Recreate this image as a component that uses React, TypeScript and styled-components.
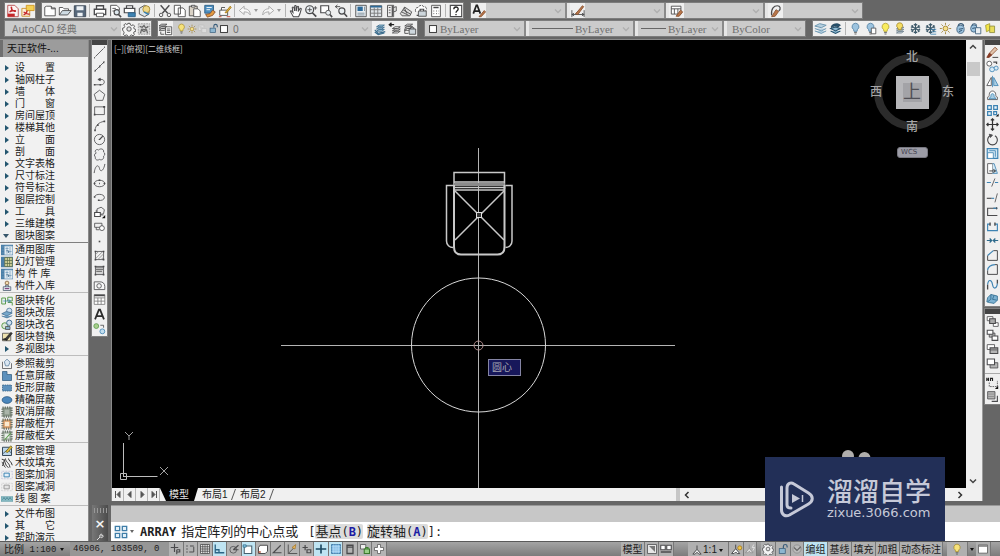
import React from "react";
import styled, { createGlobalStyle, css } from "styled-components";

const UI = `"Noto Sans", "Noto Sans CJK SC", sans-serif`;
const CJK = `"Liberation Sans", "Noto Sans CJK SC", sans-serif`;
const MONO = `"Liberation Mono", "Noto Sans CJK SC", monospace`;

const INK = "#4a4a4c";
const BLUE = "#3d83b3";
const PALE = "#a9cfe4";
const GOLD = "#e2b93c";
const GREEN = "#5a9a4a";
const BROWN = "#8a5332";

/* ---------- icons, all on a 16 by 16 grid ---------- */

const bulb = (fill: string, stroke: string) => (
  <>
    <path d="M8 1.5a4.3 4.3 0 0 0-2.4 7.8l.5 2.2h3.8l.5-2.2A4.3 4.3 0 0 0 8 1.5z" fill={fill} stroke={stroke} />
    <path d="M6.3 13h3.4M6.8 14.8h2.4" stroke="#555" />
  </>
);
const sheets = (x: number, y: number, color: string, fill = "none") => (
  <g transform={`translate(${x} ${y})`} stroke={color} fill={fill}>
    <path d="M1 7l3-2h6l-3 2zM1 4.500l3-2h6l-3 2zM1 9.500l3-2h6l-3 2z" />
  </g>
);
const sun = (
  <>
    <circle cx="8" cy="8" r="3" fill="#f6e08a" stroke="#9a7a28" />
    <path d="M8 1v2.500M8 12.500V15M1 8h2.500M12.500 8H15M3 3l1.800 1.800M11.200 11.200L13 13M13 3l-1.800 1.800M4.800 11.200L3 13" stroke="#9a7a28" />
  </>
);
const flake = (c: string) => (
  <path d="M8 1.500v13M2.500 4.700l11 6.600M13.500 4.700l-11 6.600M6 2.500l2 2 2-2M6 13.500l2-2 2 2M2.300 7.500l2.600-1-.6-2.700M13.700 7.500l-2.600-1 .6-2.700M2.300 8.800l2.600 1-.6 2.700M13.700 8.800l-2.600 1 .6 2.700" stroke={c} strokeWidth="1.300" />
);
const padlock = (open: boolean, c: string, f: string) => (
  <>
    <rect x="3" y="7.500" width="8" height="6.500" fill={f} stroke={c} />
    <path d={open ? "M8.500 7V4.500a2.500 2.500 0 0 1 5 0V6" : "M4.800 7V4.500a2.300 2.300 0 0 1 4.500 0V7"} stroke={c} strokeWidth="1.600" />
  </>
);
const hatchBox = (c: string, f: string) => (
  <>
    <rect x="1" y="1" width="14" height="14" fill={f} stroke={c} />
    <path d="M1 5.500h14M1 10.500h14M5.500 1v14M10.500 1v14" stroke={c} />
  </>
);
const fringe = (f: string, inner: string) => (
  <>
    <path d="M2 2h12v12H2z" fill={f} stroke="#667066" strokeWidth="3" strokeDasharray="1.5 1.5" />
    <path d="M5 5h6v6H5z" fill={inner} stroke="none" />
  </>
);

const ICONS = {
  pdf: (
    <>
      <path d="M2 1.500h8l4 4v9H2z" fill="#fbf4f4" stroke="#b4494a" />
      <path d="M4 9c2-1 3-3 2.500-5C6 3 5 4 7 6.500s4 2.500 4 1.500-4-.5-7 1z" stroke="#c4282b" strokeWidth="1.300" />
      <path d="M2 11h8v3.500H2z" fill="#c4282b" stroke="none" />
    </>
  ),
  pdfMail: (
    <>
      <path d="M1 5h9v9H1z" fill="#fbf0dc" stroke="#c98f2a" />
      <path d="M6 1.500h9v6H6z" fill="#f3cf52" stroke="#d09522" />
      <path d="M3 12.500c2-1 4-3 4-5M3 9c2 2 4 3 7 2.500" stroke="#c4282b" strokeWidth="1.500" />
    </>
  ),
  newFile: <path d="M2 13.500v-10l2-1h5l1.500 2H14v9z M9.500 2.500v3H14" fill="#fff" />,
  open: (
    <>
      <path d="M1.500 12.500V4h4l1.500 1.500h5V8" fill="#fff" />
      <path d="M1.500 12.500L5 7.500h10l-4 5z" fill="#cfdbe3" />
    </>
  ),
  save: (
    <>
      <path d="M1.500 2h13v12.500h-13z" fill="#56677a" stroke="#3a4654" />
      <path d="M4 2.500h8V7H4zM5 10h6v4H5z" fill="#eef2f5" stroke="none" />
    </>
  ),
  print: (
    <>
      <path d="M4 6V2h8v4M1.500 6h13v6h-13z" fill="#fff" strokeWidth="1.500" />
      <path d="M4 10.500h8v4H4z" fill="#fff" />
    </>
  ),
  preview: (
    <>
      <path d="M3 14V1.500h7l3 3V7M5 5h4M5 8h2" fill="#fff" />
      <circle cx="10" cy="9.500" r="3" fill="#dfe9ef" strokeWidth="1.300" />
      <path d="M12 12l3 3" strokeWidth="1.800" />
    </>
  ),
  publish: (
    <>
      <path d="M4 5V2h7v3M1.500 5h12v5h-12z" fill="#fff" strokeWidth="1.400" />
      <path d="M6 10h8v4.500H6z" fill={BLUE} stroke="#2b5e83" />
    </>
  ),
  printGlobe: (
    <>
      <path d="M1.500 5l6-3.500 5 2v8l-5 3-6-3z" fill="#dfe6ea" />
      <circle cx="9.500" cy="6" r="4" fill="#efd785" stroke="#a78a35" />
      <path d="M7 9l5 3" stroke={BLUE} strokeWidth="1.800" />
    </>
  ),
  cut: (
    <>
      <path d="M3 1.500l8 9M13 1.500l-8 9" strokeWidth="1.600" />
      <circle cx="3.500" cy="12.500" r="2" />
      <circle cx="12.500" cy="12.500" r="2" />
    </>
  ),
  copy: <path d="M1.500 1.500h7v10h-7zM6 4.500h5.500l2.500 2.500v7.500H6z" fill="#fff" />,
  paste: (
    <>
      <path d="M1.500 2.500h9v11h-9z" fill="#d9d2c6" />
      <path d="M4 1.500h4v2H4zM6.500 5.500h5l2.500 2.500v6.500H6.500z" fill="#fff" />
    </>
  ),
  matchProp: (
    <>
      <path d="M2 1.500h10v9H2z" fill="#4d8fc0" stroke="#2b5e83" />
      <path d="M3 12l5-1 3-4 3 2-3 4-6 2z" fill="#e39a3f" stroke={BROWN} />
      <path d="M4 4h6M4 6.500h4" stroke="#fff" />
    </>
  ),
  blockEdit: (
    <>
      <path d="M2 7h9v6H2zM4 7V4h4" fill="#fff" />
      <path d="M8 10l6-7.500 1 1.500-5 6z" fill={GOLD} stroke="#a5781c" />
      <path d="M1 14.500h3M10 14.500h4" stroke="#c23b2b" />
    </>
  ),
  undo: <path d="M14 12.500c0-5-3-7-7-7V2.500L1.500 7.500 7 12V9c3 0 5 .5 7 3.500z" fill="#f7f7f7" stroke="#a2a2a2" />,
  redo: <path d="M2 12.500c0-5 3-7 7-7V2.500l5.500 5L9 12V9c-3 0-5 .5-7 3.500z" fill="#f7f7f7" stroke="#a2a2a2" />,
  hand: <path d="M5 14.500C3.500 12 2 9.500 1.500 8.200c.8-1 2 0 3 1.300L3.700 4c.9-1 1.700-.3 2 .5L6.500 8V2.200c.7-.9 1.700-.5 1.700.3V8l1.300-5c.8-.7 1.600-.2 1.500.7L10.500 8.500 12.700 5c.8-.4 1.500 0 1.300.9-.7 3-1.500 6-3 8.600z" fill="#fff" strokeWidth="1.200" />,
  zoomRt: (
    <>
      <circle cx="6.500" cy="6.500" r="4.500" fill="#e9eef1" strokeWidth="1.400" />
      <path d="M9.500 10l4.500 4.500" strokeWidth="2" />
      <path d="M6.500 4v5M4 6.500h5M13 2.500v4M11 4.500h4" />
    </>
  ),
  zoomWin: (
    <>
      <path d="M2 2h9v8H2z" fill="#fff" strokeWidth="1.300" />
      <circle cx="10.500" cy="10" r="2.800" fill="#e9eef1" />
      <path d="M12.500 12l2.500 3" strokeWidth="1.800" />
    </>
  ),
  zoomPrev: (
    <>
      <circle cx="9" cy="8" r="3.500" fill="#e9eef1" strokeWidth="1.300" />
      <path d="M11.500 10.500l3.500 4" strokeWidth="1.800" />
      <path d="M7 3H1.500M4 1L1.500 3 4 5" />
    </>
  ),
  properties: (
    <>
      <path d="M2 1.500h12v13H2z" fill="#e7ecf0" />
      <path d="M4 3h6v5H4z" fill="#2d6a99" stroke="none" />
      <path d="M4 10.500h8M4 12.500h8M12 3v5" stroke="#7b8d99" />
    </>
  ),
  designCenter: (
    <>
      <path d="M1.500 2h13v12.500h-13z" fill="#dfe4e8" />
      <path d="M1.500 3h13" stroke="#2d6a99" strokeWidth="2" />
      <path d="M1.500 6.500h13M1.500 10.500h13M6 4v10M10 4v10" stroke="#777" />
    </>
  ),
  palettes: (
    <>
      <path d="M4 1.500h7v13H4z" fill="#ececec" />
      <path d="M9.500 2v12" strokeWidth="1.400" />
      <path d="M5.500 4h2M5.500 7h2M5.500 10h2M11 4l3-1v5l-3 1" />
    </>
  ),
  sheetSet: <path d="M1.500 11l5-7.500 8 5.500-2 4.500h-9zM3 9l8 4M4.500 6.500l8.500 5M6 4l3 7" fill="#ddd" />,
  markup: (
    <>
      <path d="M2 9c-1-3 0-5 2.500-5C6 1 10 1 11 3c3-.5 4.500 3 2 5" fill="#fff" strokeDasharray="3 1" />
      <path d="M5 8h9v6H5z" fill="#cdd6dc" />
      <path d="M7 8V6h4v2M3 13h2" strokeWidth="1.400" />
    </>
  ),
  calc: (
    <>
      <path d="M3 1.500h10v13H3z" fill="#fff" />
      <path d="M5 4h6" strokeWidth="1.700" />
      <path d="M5 8h1M8 8h1M11 8h.500M5 11h1M8 11h1M11 11h.500" />
    </>
  ),
  help: (
    <>
      <path d="M1.500 1.500h13v13h-13z" fill="#fff" strokeWidth="1.300" />
      <path d="M5.500 6c0-3.500 5-3.300 5-.3 0 2-2.500 2-2.500 4.300M8 11.300v1.500" stroke="#222" strokeWidth="1.500" />
    </>
  ),
  textStyle: (
    <>
      <path d="M1.500 11L5 1.500h1L9.500 11M3 8h5" stroke="#222" strokeWidth="2" />
      <path d="M8 14.500l6-7 1.500 1.500-5 5.500z" fill="#b9764a" stroke={BROWN} />
    </>
  ),
  dimStyle: (
    <>
      <path d="M1 7v8M15 7v8M1 12h14M3.500 10.500L1 12l2.500 1.500M12.500 10.500L15 12l-2.500 1.500" />
      <path d="M5 11l3-3 5-6 1.500 1L10 9l-2 3z" fill="#b9764a" stroke={BROWN} />
    </>
  ),
  tableStyle: (
    <>
      <path d="M1.500 2.500h11v9h-11zM1.500 5.500h11M5 5.500v6M9 5.500v6" fill="#fff" />
      <path d="M7 14l5-7 2.500 2-4 5z" fill="#b9764a" stroke={BROWN} />
    </>
  ),
  leaderStyle: (
    <>
      <path d="M3 13C2 5 6 2 9.500 2S14 6 11 8" strokeWidth="1.400" />
      <path d="M3 14.500l5-8 3 2-4 5.500z" fill="#b9764a" stroke={BROWN} />
    </>
  ),
  gear: (
    <>
      <path d="M6.800 1.500h2.400l.4 1.900 1.500.7 1.700-1 1.600 1.700-1 1.700.6 1.500 1.700.5v0 2.200l-1.800.4-.7 1.500 1 1.600-1.600 1.600-1.700-1-1.400.6-.4 1.700H6.700l-.4-1.800-1.500-.6-1.600 1-1.700-1.600 1-1.700-.6-1.400L.7 9.300V7l1.700-.4.700-1.500-1-1.700 1.600-1.600 1.700 1 1.400-.6z" fill="#f4f4f4" />
      <circle cx="8" cy="8" r="2.500" fill="#e4e4e4" />
    </>
  ),
  myWorkspace: (
    <>
      <path d="M1.500 2h13v12h-13z" fill="#d8d8d8" stroke="#999" strokeDasharray="2 1" />
      <path d="M3 5l3 1 2-2 2 3 3-2M4 13l1-4 3 2 3-2 1 4M5 8l6 1" stroke="#666" strokeWidth="1.400" />
    </>
  ),
  layerProps: (
    <>
      {sheets(-1, 0, INK)}
      <path d="M7.500 5.500h7v9h-7zM9 8h4M9 10h4M9 12h4" fill="#fff" />
      <path d="M2 11v3h4" />
    </>
  ),
  bulbOn: bulb("#f6e27a", "#a48a2c"),
  bulbBlue: bulb("#9cc3df", "#4d7da0"),
  bulbBlueIso: (
    <>
      {bulb("#9cc3df", "#4d7da0")}
      <path d="M9 7.500h5.500v7H9z" fill="#fff" />
    </>
  ),
  bulbSheets: (
    <>
      {sheets(2, 4, "#667a88", "#d5dee4")}
      <path d="M7 1a3.500 3.500 0 0 0-2 6.500v2h4v-2A3.500 3.500 0 0 0 7 1z" fill="#f4dc62" stroke="#a48a2c" />
    </>
  ),
  sun,
  vpFreeze: <path d="M2 3h8v4M2 3v8h4M7 8h7v6H7z" stroke="#bdbdbd" fill="#dcdcdc" />,
  unlock: padlock(true, "#3a5d7a", "#8db6d0"),
  swatch: <rect x="2.500" y="2.500" width="11" height="11" fill="#fff" stroke="#333" strokeWidth="1.500" />,
  layerCurrent: <>{sheets(3, 1, "#3a6c8d", PALE)}<path d="M2 9l4 4 8-2M2 11.500l4 3 7-2" stroke="#3a6c8d" strokeWidth="1.300" /></>,
  layerPrev: <>{sheets(4, 3, INK, "#fff")}<path d="M7 3H2M4 1L1.500 3 4 5" stroke="#222" strokeWidth="1.500" /></>,
  layerState: <>{sheets(1, 0, INK, "#fff")}<path d="M7 8h7.500v6H7zM8.500 8V6.500h4V8" fill="#cdd6dc" /><path d="M2 8v5h4" /></>,
  layerStack: (
    <path d="M1 5l6-3 8 2-6 3zM1 8l8 3 6-3M1 11l8 3 6-3" fill="#b5cfdf" stroke="#6d97b1" strokeWidth="1.200" />
  ),
  layerMerge: (
    <>
      <path d="M3 5c2-3 8-4 11-1l-3 2c-3-2-6-1-8 1z" fill="#27536f" stroke="#1c3e55" />
      <path d="M2 8l6-2 6 2-6 3zM2 11l6 3 6-3" fill="#8fbad3" stroke="#27536f" strokeWidth="1.300" />
    </>
  ),
  bulbYellow: bulb("#f9ec5e", "#b1a02c"),
  flake: flake("#3c5868"),
  flakeSheets: <>{flake("#3c5868")}<path d="M8 9h7M9 12h6M8 15h7" stroke="#3d83b3" /></>,
  lockBlue: <><ellipse cx="8" cy="9" rx="4.500" ry="5" fill="#9cc3df" stroke="#3a5d7a" /><path d="M5 5c1-4 6-4 7 0M6 9l5-1M6 12l4-2" stroke="#3a5d7a" strokeWidth="1.300" /></>,
  lockBlueIso: <><ellipse cx="6" cy="8" rx="4" ry="4.500" fill="#9cc3df" stroke="#3a5d7a" /><path d="M4 8l4-1M3.500 4.500c1-3 5-3 6 0" stroke="#3a5d7a" strokeWidth="1.300" /><path d="M8 7h6.500v7.500H8z" fill="#e9eef1" stroke="#3a5d7a" /></>,
  lockYellow: <><path d="M2 4l5-2v8l-4 2z" fill="#f4e545" stroke="#a09a2c" /><path d="M7 5h6v8H7z" fill="#e8dd5c" stroke="#8a8a3c" /></>,

  line: <><path d="M3 13L13 3" /><path d="M1.500 14.500h1M13.500 1.500h1" strokeWidth="2" /></>,
  xline: <><path d="M2 14L14 2" /><path d="M2 13h1.500M7.500 8H9M12.500 3H14" strokeWidth="2.200" /></>,
  pline: <><path d="M2 12h8c5 0 5-6 1-6.500H8" /><path d="M1 12h2M8 12h2" strokeWidth="2" /><path d="M6 5.500L9 4v3z" fill={INK} /></>,
  polygon: <path d="M8 1.500l6.500 5L12 14H4L1.500 6.500z" />,
  rect: <><path d="M2 3.500h12v9.500H2z" /><path d="M12.500 3.500H15M1 13h2" strokeWidth="2.200" /></>,
  arc: <><path d="M2.500 14C3 8 7 4 13.500 3" /><path d="M1.500 14h2M5 7.500h2M13 3h2" strokeWidth="2.200" /></>,
  circle: <><circle cx="8" cy="8" r="6.300" /><path d="M8 8l4-4M7 8h2" strokeWidth="1.400" /></>,
  cloud: <path d="M4 6C1 4 4 .5 7 2.500 9 0 14 1 13 5c2 1 2 4 0 5 1 4-3 5.500-5 4-3 2-6 0-5-3-2-1-1.500-4 1-5z" />,
  spline: <path d="M1.500 13C3 3 7 3 8 8s5 3 6.500-5M1 13h1M14 3h1" />,
  ellipse: <><ellipse cx="8" cy="8" rx="6.500" ry="4" /><path d="M1 8h2M13 8h2M7 4h2M7.500 8h1" strokeWidth="1.800" /></>,
  ellipseArc: <><path d="M2 7c1-4 12-4 12 1 0 3-4 4-7 3.500" /><path d="M1 7.500h2M6 11.500h2" strokeWidth="1.800" /></>,
  insert: <><path d="M5 3.500l5-2 4 3-1 5-5 1-3-3z" fill="#eee" /><path d="M2 8h7v5H2z" fill="#fff" strokeWidth="1.300" /><path d="M4 8V5M9 11h4" /><path d="M15 11v4h-4z" fill="#111" stroke="none" /></>,
  block: <><path d="M2 4h9v5H2zM4 9v3h4" /><circle cx="11" cy="10" r="3" fill="#fff" /></>,
  point: <path d="M7 8h2" strokeWidth="2" />,
  hatch: <><path d="M3 3h10v10H3z" /><path d="M3 7l4-4M3 12l9-9M6 13l7-7M10 13l3-3" stroke="#888" /><path d="M2 3h2M12 3h2M2 13h2M12 13h2" strokeWidth="2" /></>,
  gradient: <><path d="M3 3h10v10H3z" fill="#d4d4d4" /><path d="M3 4h10M3 6.500h10M4 9h7" stroke="#777" strokeWidth="1.500" /><path d="M2 3h2M12 3h2M2 13h2M12 13h2" strokeWidth="2" /></>,
  region: <><path d="M1.500 3.500h7a6 6 0 0 1 6 5.500v4h-13z" fill="#f8f8f8" /><circle cx="7.500" cy="8.500" r="2.800" /></>,
  table: <><path d="M1.500 2h13v12h-13zM1.500 6h13M6 6v8M10 6v8M1.500 10h13" fill="#fff" stroke="#777" /><path d="M1.500 3h13" strokeWidth="2" /></>,
  mtext: <path d="M2.500 14L7.300 2h1.400l4.800 12M4.500 10h7" stroke="#2c2c2c" strokeWidth="2.200" />,
  addSelected: <><circle cx="4" cy="5" r="3" fill="#a8cf8c" stroke={GREEN} /><circle cx="11.500" cy="11.500" r="3" fill="#c4dff0" stroke={BLUE} /><path d="M9 4h4v3" /></>,

  erase: <><path d="M4 9l7-7.500 3 2.500-7 7z" fill="#e1c3ac" stroke={BROWN} /><path d="M4 9l3 2-3 3H1z" fill="#8d3b22" stroke="#7a3420" /><path d="M8 14h7" stroke="#222" /></>,
  copyObj: <><circle cx="4" cy="4.500" r="3" fill="#fff" stroke={INK} /><circle cx="7.500" cy="11.500" r="3" fill="#d8ecf8" stroke={BLUE} /><circle cx="12.500" cy="10" r="2.500" fill="#d8ecf8" stroke={BLUE} /><path d="M9 2.500h4V5" strokeWidth="1.600" /></>,
  mirror: <><path d="M6.500 3v10H1z" fill="#fff" /><path d="M9.500 3v10H15z" fill={PALE} stroke={BLUE} /><path d="M8 1v14" stroke={BLUE} /></>,
  offset: <><path d="M2 13v-3c2 0 2-2 2-3 0-6 8-6 8 0 0 1 0 3 2 3v3z" fill="#fff" /><path d="M4 12v-1c2 0 2-2 2-3 0-3 4-3 4 0 0 1 0 3 2 3v1z" fill={PALE} stroke={BLUE} /></>,
  array: <><path d="M2 2h4.500v4.500H2zM9.500 2H14v4.500H9.500zM2 9.500h4.500V14H2z" fill="#eaf4fa" stroke={BLUE} strokeWidth="1.500" /><path d="M9.500 9.500H13V13H9.500z" fill="#eaf4fa" stroke={BLUE} strokeWidth="1.500" /><path d="M15.500 12v3.500H12z" fill="#111" stroke="none" /></>,
  arrayCommand: <path d="M1.500 1.500h5v5h-5zM9.500 1.500h5v5h-5zM1.500 9.500h5v5h-5zM9.500 9.500h5v5h-5z" fill="#e4f1f9" stroke="#3f7ea8" strokeWidth="1.500" />,
  move: <path d="M8 1v14M1 8h14M6 3l2-2 2 2M6 13l2 2 2-2M3 6L1 8l2 2M13 6l2 2-2 2" stroke="#333" strokeWidth="1.500" />,
  rotate: <><path d="M5 3.500a6 6 0 1 0 6 0" strokeWidth="1.400" /><path d="M4 1.500l4 1-2.500 3z" fill={INK} /></>,
  scale: <><path d="M1.500 2h13v12h-13z" fill="#d4e8f4" stroke={BLUE} strokeWidth="1.400" /><path d="M2 7h7v7H2z" fill="#fff" stroke={BLUE} /><path d="M4 4.500h7.500V12" stroke={BLUE} /></>,
  stretch: <><path d="M2 2h6v12H2z" fill="#fff" /><path d="M8 2h2l4 12H8" fill="#d4e8f4" stroke={BLUE} /><path d="M4 11h7M9 9l3 2-3 2" stroke="#222" /></>,
  trim: <><path d="M1 8h5M11 8h4" stroke={BLUE} strokeWidth="1.400" /><path d="M7 13l4-10" /></>,
  extend: <><path d="M1 9h6" stroke={INK} strokeWidth="1.400" /><path d="M7 9h3" stroke={BLUE} strokeWidth="1.400" /><path d="M11 14l3-11" /></>,
  breakAt: <><path d="M14 4H2v9h12" stroke={INK} strokeWidth="1.300" /><path d="M9 4h5" stroke={BLUE} strokeWidth="1.500" /><path d="M13 2.500v3" /></>,
  breakGap: <><path d="M5 5H2v8h12V5h-3" stroke={BLUE} strokeWidth="1.400" /><path d="M5 3v4M11 3v4" strokeWidth="1.700" /></>,
  join: <path d="M1 8h5M10 8h5M4.500 5.500L7 8l-2.500 2.500M11.500 5.500L9 8l2.500 2.500" stroke="#2d6a8c" strokeWidth="1.500" />,
  chamfer: <><path d="M2 8v6h12V2H9" strokeWidth="1.200" /><path d="M2 8l7-6" stroke={BLUE} strokeWidth="1.400" /></>,
  fillet: <><path d="M2 9v5h12V2h-3" strokeWidth="1.200" /><path d="M2 9c0-4 4-7 9-7" stroke={BLUE} strokeWidth="1.400" /></>,
  blend: <><path d="M2 14V8M14 2v5" strokeWidth="1.600" /><path d="M2 8c1-7 5-6 6 0s5 6 6-1" stroke={BLUE} strokeWidth="1.400" /></>,
  explode: <><path d="M2 7l4-4 4 1 4 1v5l-4 4-6-1-3-1z" fill="#7db2d2" stroke="#2d6a8c" /><path d="M6 3v6l-4 3M10 4l-2 5 5 1" stroke="#2d6a8c" /></>,

  orderFront: <><path d="M1.500 2h7v5h-7zM9 9.500h6v4.500H9z" fill="#fff" /><path d="M4.500 4.500h7v6h-7z" fill="#a9a9a9" strokeWidth="1.300" /></>,
  orderBack: <><path d="M4 5h7v5H4z" fill="#bbb" /><path d="M1.500 1.500h7v5h-7zM7.500 8.500h7V14h-7z" fill="#fff" strokeWidth="1.300" /></>,
  orderAbove: <><path d="M1.500 2h9v6h-9z" fill="#fff" /><path d="M5 6h9.500v7H5z" fill="#b5b5b5" strokeWidth="1.300" /><path d="M5 8.500h9" /></>,
  orderUnder: <><path d="M5 7h9.500v6.500H5z" fill="#b5b5b5" /><path d="M1.500 2.500h9v7h-9z" fill="#fff" strokeWidth="1.300" /></>,
  textFront: <><path d="M1 2v4M3 2v4M5.500 2v4M8 2v4M1 4h2M5.500 3h2" stroke="#222" strokeWidth="1.400" /><path d="M4 8v5h10V6" strokeDasharray="2 1" /><path d="M15 12v4h-4z" fill="#111" stroke="none" /></>,
  hatchBack: <><path d="M2 2h9v9H2z" fill="#b5b5b5" /><path d="M7 14h7V7" strokeWidth="1.400" /><path d="M2 5h9M2 8h9" stroke="#888" /></>,

  libA: <><path d="M0 1h16v14H0z" fill="#4a7fa8" stroke="none" /><path d="M5 3h10v11H5z" fill="#e9eff4" stroke="#b9cfdf" /><path d="M1 4h3M1 8h3M1 12h3M8 4v9M12 4v9M6 6h4M10 10h4" stroke="#6f98b8" /><path d="M7 9h3v3" stroke="#3c6585" /></>,
  libB: <><path d="M0 1h16v14H0z" fill="#4a7fa8" stroke="none" /><path d="M5 2h10v12H5z" fill="#d4d39a" stroke="#5a6c4a" /><path d="M8.500 2v12M11.500 2v12M5 6h10M5 10h10" stroke="#5a6c4a" /></>,
  libPut: <><circle cx="8" cy="4" r="2.500" fill="#f4ddb0" stroke="#7a5530" /><path d="M3 9h10v5H3zM6 9V7h4v2" fill="#e6ecf4" stroke="#44566a" /><path d="M5 11.500h6" stroke="#7a3f78" strokeWidth="1.500" /></>,
  convert: <><path d="M1 4h5v8H1zM9 3h6v5H9zM9 10h6v4" stroke={GREEN} fill="#eaf1f5" strokeWidth="1.300" /><path d="M3 8h9M10 6l3 2-3 2" stroke={BLUE} /></>,
  relayer: <><circle cx="11" cy="5" r="3.500" fill="#cfe0f0" stroke="#406c90" /><path d="M1 9l6-3 8 2-7 4zM1 12l7 2.500 7-3" fill="#76a7ca" stroke="#406c90" /></>,
  rename: <><circle cx="5" cy="9" r="4" fill="#dde8dd" stroke={GREEN} strokeWidth="1.300" /><circle cx="11" cy="5" r="3.500" fill="#cfe0f0" stroke="#406c90" strokeWidth="1.300" /><path d="M6 10h6v4H6z" fill="#86b0c8" /></>,
  replace: <><path d="M2 3h11v10H2z" fill="#efe3b0" stroke="#444" /><path d="M5 11l8-9 2 1-7 9zM2 12c2-3 5-2 6 1" fill="#3c3c3c" stroke="#222" /></>,
  xclip: <><path d="M2 5v9h12V7" fill="#f4f4f4" /><path d="M8 1.500l4 4-2 5H6L4.500 5z" fill="#dbe7f2" stroke="#54789a" /></>,
  anyMask: <path d="M2 2h6v4h6v8H2z" fill="#5d91bd" stroke="#335d82" />,
  rectMask: <path d="M2 4h12v8H2z" fill="#5d91bd" stroke="#335d82" strokeDasharray="2 1" />,
  exactMask: <ellipse cx="8" cy="8" rx="6.500" ry="4.500" fill="#4a86bc" stroke="#27527a" />,
  noMask: fringe("#8a978a", "#aab4aa"),
  frameOn: fringe("#d99a66", "#fbe9cf"),
  frameOff: <>{fringe("#a8b7a8", "#e9efe9")}<path d="M5 13l8-9" stroke={GREEN} strokeWidth="1.500" /></>,
  patternMgr: <><path d="M2 3h12v11H2z" fill="#bcd6ea" stroke="#345" strokeWidth="1.300" /><path d="M2 12l7-6 5 5" stroke="#345" /><path d="M6 9l7-8 2 2-6 7z" fill={GOLD} stroke="#6a6a2c" /></>,
  wood: <path d="M1 3c6 0 3 8 9 11M1 7c3 1 2 5 5 7M6 2c0 5 5 5 6 12M10 2c0 3 4 4 5 9M2 12l3-9" stroke="#333" strokeWidth="1.300" />,
  holeAdd: <><path d="M1 3h14v10H1z" stroke="#aac" strokeDasharray="1 1" /><path d="M4 5.500h7v5H4z" fill="#e4f0fa" stroke="#3d83b3" strokeWidth="1.300" /></>,
  holeSub: <><path d="M1 3h14v10H1z" stroke="#bbb" strokeDasharray="1 1" /><path d="M4 5.500h7v5H4z" fill="#e4e4e4" stroke="#9a9a9a" strokeWidth="1.300" /></>,
  linePattern: <><path d="M0 5h16v6H0z" fill="#8fc0c8" stroke="#5a98a4" /><path d="M2 9l2-3 2 3 2-3 2 3 2-3 2 3" stroke="#3d7a88" /></>,

  snapInfer: <path d="M6 1v11M1 6h10M9 9v6M9 9h4v3H9" strokeWidth="1.500" />,
  snap: <path d="M3 4h2M3 8h2M7 12h6V5M3 12h2M8 4h5" strokeWidth="1.300" />,
  grid: <path d="M2 2h12v12H2zM2 5h12M2 8h12M2 11h12M5 2v12M8 2v12M11 2v12" fill="#eee" stroke="#444" />,
  ortho: <path d="M3 2v11h12M3 9h5v4" stroke="#2a6486" strokeWidth="1.700" />,
  polar: <><circle cx="7" cy="9" r="4.500" /><path d="M7 9l7-6M7 9h7" strokeWidth="1.500" /></>,
  osnap: <><path d="M3 4h10v10H3z" fill="#fff" stroke="#46606e" strokeWidth="1.400" /><path d="M1.500 2.500h4v3h-4z" fill="#8fd0ea" stroke="#2a6486" /></>,
  osnap3d: <><path d="M4 3h10v8l-3 3H2V6z" fill="#fff" strokeWidth="1.300" /><path d="M2 12h3" stroke="#b34b32" strokeWidth="2" /></>,
  otrack: <path d="M13 3L3 13h11" strokeWidth="1.500" />,
  ducs: <><path d="M3 2v12h12M3 14l8-8" stroke="#555" strokeWidth="1.300" /><path d="M8 6l5-4-1 6z" fill="#e8b860" stroke="#a5782c" /></>,
  dyn: <path d="M2 6h7M5.500 2.500v7M8 9h5v4H8z" strokeWidth="1.600" />,
  lwt: <path d="M8 2v12M1 8h14" stroke="#1d4a63" strokeWidth="2.200" />,
  tpy: <><path d="M2 2h12v12H2z" fill="#7cb8e4" stroke="#2d6a99" /><path d="M2 5h12M2 8h12M2 11h12M5 2v12M8 2v12M11 2v12" stroke="#b9dcf4" /></>,
  qp: <path d="M4 3h8v11H4zM4 5.500h8" strokeWidth="1.700" />,
  sc: <><path d="M2 2h7v6H2z" fill="#eee" /><path d="M7 8h7v6H7zM9 8V6h3v2" fill="#9ad08a" stroke="#3a7a2c" strokeWidth="1.400" /></>,
  plus: <path d="M6 2h4v4h4v4h-4v4H6v-4H2V6h4z" fill="#fff" stroke="#555" />,
  quickLayout: <><path d="M2 2h12v12H2z" fill="#e6e6e6" /><path d="M4 4l8 8V4z" fill="#777" stroke="none" /></>,
  quickView: <><path d="M1 3h6v6H1zM9 3h6v6H9z" fill="#fff" strokeWidth="1.400" /><path d="M1 12h14" strokeWidth="2" /></>,
  annoScale: <path d="M8 2v5L2.500 13.500h3L8 11l2.500 2.500h3L8 7" fill="#eee" strokeWidth="1.300" />,
  annoVis: <><path d="M7 2v5L2 13h3l2-2 2 2h3L7 7" fill="#fff" strokeWidth="1.200" /><circle cx="12" cy="6" r="2.500" fill="#efc84a" stroke="#a5781c" /></>,
  annoAuto: <><path d="M7 2v5L2 13h3l2-2 2 2h3L7 7" fill="#ddd" stroke="#8a8a8a" /><path d="M13 2l-2 4h3l-2 4" stroke="#eee" /></>,
  hardware: <><circle cx="8" cy="8" r="5.500" fill="#bbb" stroke="#888" /><path d="M4 6l4 4 5-5" stroke="#666" strokeWidth="1.500" /></>,
  cleanScreen: <><path d="M2 2.500h12v11H2z" fill="#fff" stroke="#555" /><path d="M2 4h12" stroke="#777" strokeWidth="2" /></>,
  wrench: <path d="M2 14l6-6M8 8c-2-4 2-7 4-5L10 5l1 1 3-1c1 3-2 5-5 4" stroke="#eee" strokeWidth="1.800" />,
} satisfies Record<string, React.ReactNode>;

type IconName = keyof typeof ICONS;

const Icon = ({ name, size = 14 }: { name: IconName; size?: number }) => (
  <svg width={size} height={size} viewBox="0 0 16 16" fill="none" stroke={INK} strokeWidth="1" aria-hidden="true">
    {ICONS[name]}
  </svg>
);

const Chevron = ({ color = "#aaa", turn = 0 }: { color?: string; turn?: number }) => (
  <svg width="8" height="8" viewBox="0 0 8 8" fill="none" stroke={color} strokeWidth="1.500" aria-hidden="true">
    <path d="M1 2.500l3 3 3-3" transform={`rotate(${turn} 4 4)`} />
  </svg>
);

/* ---------- page ---------- */

const GlobalStyle = createGlobalStyle`
  * { box-sizing: border-box; }
  body { margin: 0; background: #666; font-family: ${UI}; font-size: 10px; color: #222; overflow: hidden; }
  button, input, select { font: inherit; color: inherit; border: 0; padding: 0; margin: 0; background: none; border-radius: 0; outline: 0; }
  svg { display: block; flex: none; }
`;

const Shell = styled.div`
  display: flex;
  flex-direction: column;
  height: 100vh;
`;

const Bars = styled.header`
  display: flex;
  flex-direction: column;
  gap: 3px;
  padding: 3px 0 3px 5px;
  border-bottom: 1px solid #8c8c8c;
`;

const BarRow = styled.div`
  display: flex;
  height: 15px;
`;

const Bar = styled.div<{ $after?: number; $grow?: boolean }>`
  display: flex;
  align-items: stretch;
  background: #efefef;
  margin-right: ${(p) => p.$after ?? 7}px;
  box-shadow: 0 0 0 1px #7c7c7c;
  overflow: hidden;
  ${(p) => p.$grow && css`flex: 1;`}
`;

const ToolButton = styled.button<{ $w?: number }>`
  display: flex;
  align-items: center;
  justify-content: center;
  width: ${(p) => p.$w ?? 15}px;
  flex: none;
`;

const Divider = styled.span`
  width: 1px;
  margin: 1px 2px;
  flex: none;
  background: #b4b4b4;
`;

const DropArrow = styled.button<{ $color?: string }>`
  width: 8px;
  flex: none;
  display: flex;
  align-items: center;
  justify-content: center;
  &::before {
    content: "";
    border: 2px solid transparent;
    border-top: 3px solid ${(p) => p.$color ?? "#999"};
    border-bottom: 0;
  }
`;

const Combo = styled.label<{ $w: number }>`
  display: flex;
  align-items: center;
  width: ${(p) => p.$w}px;
  flex: none;
  padding: 0 3px;
  background: #cbcbcb;
  color: #707070;
`;

const ComboSelect = styled.select<{ $serif?: boolean }>`
  appearance: none;
  flex: 1;
  min-width: 0;
  height: 15px;
  padding-left: ${(p) => (p.$serif ? 2 : 4)}px;
  font-family: ${(p) => (p.$serif ? `"Liberation Serif", serif` : UI)};
  font-size: ${(p) => (p.$serif ? 11 : 10)}px;
`;

const LineSample = styled.span<{ $w: number }>`
  width: ${(p) => p.$w}px;
  flex: none;
  border-top: 1px solid #666;
`;

const ComboGap = styled.span`
  width: 5px;
  flex: none;
  background: #e6e6e6;
  border-left: 2px solid #8a8a8a;
`;

function Tools({ items, size }: { items: (IconName | "|" | "v")[]; size?: number }) {
  return (
    <>
      {items.map((it, i) =>
        it === "|" ? <Divider key={i} /> : it === "v" ? <DropArrow key={i} aria-label="more" /> : (
          <ToolButton key={i} aria-label={it}><Icon name={it} size={size} /></ToolButton>
        )
      )}
    </>
  );
}

/* ---------- left menu ---------- */

const Body = styled.div`
  display: flex;
  flex: 1;
  min-height: 0;
`;

const Menu = styled.nav`
  display: flex;
  flex-direction: column;
  width: 89px;
  flex: none;
  background: #f1f1f1;
  border-right: 1px solid #8a8a8a;
  overflow: hidden;
`;

const MenuTitle = styled.h2`
  margin: 0 0 5px;
  height: 17px;
  flex: none;
  padding-left: 4px;
  border-left: 3px solid #6f6f6f;
  background: #9c9c9c;
  font: 400 10px/17px ${CJK};
  color: #111;
`;

const MenuItem = styled.button`
  display: flex;
  align-items: center;
  height: 12px;
  flex: none;
  font: 400 10px/12px ${CJK};
  color: #222;
  white-space: pre;
  text-align: left;
`;

const MenuMark = styled.span`
  display: flex;
  width: 15px;
  flex: none;
  padding-left: 1px;
`;

const Caret = styled.span<{ $open?: boolean }>`
  margin-left: ${(p) => (p.$open ? 2 : 4)}px;
  border: 3px solid transparent;
  ${(p) => p.$open
    ? css`border-top: 4px solid #37566b; border-bottom: 0;`
    : css`border-left: 4px solid #24566f; border-right: 0;`}
`;

const MenuRule = styled.hr<{ $strong?: boolean }>`
  width: 100%;
  flex: none;
  margin: 0;
  border: 0;
  height: ${(p) => (p.$strong ? 2 : 3)}px;
  background: linear-gradient(${(p) => (p.$strong ? "#808080" : "#bdbdbd")}, ${(p) => (p.$strong ? "#808080" : "#bdbdbd")}) 0 0 / 100% 1px no-repeat;
`;

type Entry = [string, (IconName | "open")?];
const MENU: Entry[][] = [
  [["设　　置"], ["轴网柱子"], ["墙　　体"], ["门　　窗"], ["房间屋顶"], ["楼梯其他"], ["立　　面"], ["剖　　面"], ["文字表格"], ["尺寸标注"], ["符号标注"], ["图层控制"], ["工　　具"], ["三维建模"], ["图块图案", "open"]],
  [["通用图库", "libA"], ["幻灯管理", "libB"], ["构 件 库", "libA"], ["构件入库", "libPut"]],
  [["图块转化", "convert"], ["图块改层", "relayer"], ["图块改名", "rename"], ["图块替换", "replace"], ["多视图块"]],
  [["参照裁剪", "xclip"], ["任意屏蔽", "anyMask"], ["矩形屏蔽", "rectMask"], ["精确屏蔽", "exactMask"], ["取消屏蔽", "noMask"], ["屏蔽框开", "frameOn"], ["屏蔽框关", "frameOff"]],
  [["图案管理", "patternMgr"], ["木纹填充", "wood"], ["图案加洞", "holeAdd"], ["图案减洞", "holeSub"], ["线 图 案", "linePattern"]],
  [["文件布图"], ["其　　它"], ["帮助演示"]],
];

/* ---------- work area ---------- */

const Main = styled.main`
  display: flex;
  flex-direction: column;
  flex: 1;
  min-width: 0;
`;

const Upper = styled.div`
  display: flex;
  flex: 1;
  min-height: 0;
`;

const SideColumn = styled.div`
  width: 15px;
  margin: 0 4px 0 3px;
  flex: none;
  &:last-child { margin: 0 0 0 2px; }
`;

const SideBar = styled.div<{ $h: number }>`
  display: flex;
  flex-direction: column;
  height: ${(p) => p.$h}px;
  padding-top: 5px;
  margin-bottom: 3px;
  background: linear-gradient(#444 5px, #f0f0f0 5px);
  box-shadow: 0 0 0 1px #808080;
`;

const SideTool = styled.button`
  flex: 1;
  min-height: 0;
  display: flex;
  align-items: center;
  justify-content: center;
`;

const SideRule = styled.span`
  height: 1px;
  margin: 2px 0;
  flex: none;
  background: #aaa;
`;

const Frame = styled.section`
  display: flex;
  flex-direction: column;
  flex: 1;
  min-width: 0;
  margin-bottom: 4px;
  border-left: 1px solid #8a8a8a;
  border-right: 1px solid #9a9a9a;
`;

const ViewRow = styled.div`
  display: flex;
  flex: 1;
  min-height: 0;
`;

const Viewport = styled.div`
  position: relative;
  flex: 1;
  min-width: 0;
  background: #000;
  overflow: hidden;
`;

const Drawing = styled.svg`
  width: 100%;
  height: 100%;
`;

const ViewLabel = styled.div`
  position: absolute;
  left: 2px;
  top: 3px;
  font: 8px/12px "Noto Sans CJK SC", sans-serif;
  color: #cfcfcf;
  white-space: nowrap;
`;

const SnapTip = styled.div`
  position: absolute;
  left: 376px;
  top: 319px;
  width: 33px;
  height: 17px;
  padding-left: 3px;
  border: 1px solid #8484a4;
  background: #17175a;
  font: 10px/15px ${CJK};
  color: #a5a5b4;
`;

const Cube = styled.div`
  position: absolute;
  right: 7px;
  top: 7px;
  display: grid;
  grid-template: 20px 50px 20px / 22px 50px 22px;
  place-items: center;
  font: 500 12px/12px ${CJK};
  color: #a6a6a6;
`;

const Ring = styled.span`
  grid-area: 1 / 1 / 4 / 4;
  width: 76px;
  height: 76px;
  border: 8px solid #2b2b2b;
  border-radius: 50%;
`;

const Compass = styled.span<{ $area: string }>`
  grid-area: ${(p) => p.$area};
`;

const TopFace = styled.button`
  grid-area: 2 / 2;
  width: 33px;
  height: 33px;
  border: 7px solid #b7b7ba;
  background: #a3a3a7;
  font: 400 18px/18px ${CJK};
  color: #505056;
`;

const Wcs = styled.button`
  position: absolute;
  right: 38px;
  top: 107px;
  width: 31px;
  height: 11px;
  padding-left: 3px;
  border: 1px solid #777780;
  border-radius: 3px;
  background: #9c9ca6;
  font: 7px/9px "DejaVu Sans", sans-serif;
  color: #444450;
  text-align: left;
`;

const UcsMark = styled.svg`
  position: absolute;
  left: 8px;
  bottom: 5px;
`;

const VScroll = styled.div`
  display: flex;
  flex-direction: column;
  align-items: center;
  width: 16px;
  flex: none;
  padding: 3px 2px 3px 0;
  background: #efefef;
`;

const VThumb = styled.span`
  width: 13px;
  height: 14px;
  margin: 11px 0 auto;
  background: #c9c9c9;
`;

const TabRow = styled.div`
  display: flex;
  height: 13px;
  flex: none;
  background: #f0f0f0;
  color: #222;
`;

const TabNav = styled.button`
  width: 12px;
  flex: none;
  display: flex;
  align-items: center;
  justify-content: center;
  border-right: 1px solid #b5b5b5;
`;

const Tab = styled.button<{ $active?: boolean }>`
  position: relative;
  width: 38px;
  flex: none;
  padding-left: ${(p) => (p.$active ? 9 : 4)}px;
  font: 10px/12px ${CJK};
  text-align: left;
  ${(p) => p.$active
    ? css`background: #000; color: #e4e4e4; clip-path: polygon(0 0, 100% 0, 34px 100%, 6px 100%);`
    : css`&::after { content: ""; position: absolute; right: 2px; top: 1px; height: 11px; border-right: 1px solid #555; transform: skewX(-20deg); }`}
`;

const HScroll = styled.div`
  display: flex;
  align-items: center;
  justify-content: space-between;
  width: 306px;
  margin-left: auto;
  padding: 0 18px 0 3px;
  border-left: 4px solid #c6c6c6;
`;

/* ---------- command line ---------- */

const CommandDock = styled.section`
  display: flex;
  height: 36px;
  flex: none;
  padding-left: 3px;
`;

const DockHandle = styled.div`
  display: flex;
  flex-direction: column;
  align-items: center;
  justify-content: space-between;
  width: 16px;
  flex: none;
  margin-right: 3px;
  padding: 3px 0 0;
  background: linear-gradient(90deg, #777, #4c4c4c);
  overflow: hidden;
`;

const Grip = styled.span`
  width: 13px;
  height: 5px;
  background: repeating-linear-gradient(90deg, #999 0 1px, transparent 1px 3px);
`;

const CloseButton = styled.button`
  font: 700 13px/13px "DejaVu Sans", sans-serif;
  color: #f4f4f4;
`;

const CommandPane = styled.div`
  display: flex;
  flex-direction: column;
  flex: 1;
  min-width: 0;
  background: #c7c7c7;
  border-top: 1px solid #999;
`;

const CommandLine = styled.form`
  display: flex;
  align-items: center;
  height: 19px;
  margin-top: auto;
  padding-left: 3px;
  background: #fff;
  font: 13px/16px ${CJK};
  color: #222;
  white-space: pre;
`;

const Verb = styled.b`
  margin: 0 5px 0 4px;
  font: 700 12px/16px "DejaVu Sans Mono", monospace;
`;

const Latin = styled.span`
  font: 12px/16px "DejaVu Sans Mono", monospace;
`;

const Opening = styled(Latin)`
  margin-left: 10px;
`;

const Option = styled.button`
  height: 15px;
  margin-right: 4px;
  background: #dcdcdc;
  border-radius: 2px;
  font: 13px/15px ${CJK};
  b { color: #1c1ca4; }
  &:last-of-type { margin-right: 0; }
`;

const Typed = styled.input`
  flex: 1;
  min-width: 0;
`;

/* ---------- status bar ---------- */

const Status = styled.footer`
  display: flex;
  height: 15px;
  flex: none;
  background: linear-gradient(#a4a4a4, #7c7c7c);
  border-top: 1px solid #5a5a5a;
  font: 10px/14px ${CJK};
  color: #1c1c1c;
  overflow: hidden;
  white-space: pre;
`;

const ScaleBox = styled.button`
  display: flex;
  align-items: center;
  width: 58px;
  flex: none;
  padding: 3px 0 0 4px;
  font: 10px/11px ${MONO};
  white-space: pre;
  small { font-size: 9px; }
`;

const Coords = styled.output`
  width: 99px;
  flex: none;
  margin-left: 4px;
  padding-left: 3px;
  background: #969696;
  font: 9px/15px ${MONO};
`;

const Modes = styled.div`
  display: flex;
  width: 218px;
  flex: none;
`;

const Mode = styled.button<{ $on?: boolean }>`
  display: flex;
  align-items: center;
  justify-content: center;
  flex: 1;
  border-right: 1px solid #777;
  background: ${(p) => (p.$on ? "#bfe4f2" : "#b4b4b4")};
`;

const StatusRight = styled.div`
  display: flex;
  margin-left: auto;
`;

const Cell = styled.button<{ $w: number; $on?: boolean; $plain?: boolean }>`
  display: flex;
  align-items: center;
  justify-content: center;
  width: ${(p) => p.$w}px;
  flex: none;
  padding-top: ${(p) => (p.$plain ? 0 : 2)}px;
  border-right: 1px solid #777;
  background: ${(p) => (p.$on ? "#bfe4f2" : "#b0b0b0")};
`;

const Gap = styled.span<{ $w: number }>`
  width: ${(p) => p.$w}px;
  flex: none;
`;

/* ---------- site badge ---------- */

const Badge = styled.a`
  position: fixed;
  right: 55px;
  bottom: 15px;
  display: flex;
  align-items: center;
  gap: 12px;
  width: 180px;
  height: 84px;
  padding-left: 14px;
  background: #222f57;
  color: #c6c9d8;
  text-decoration: none;
`;

const BadgeText = styled.span`
  display: flex;
  flex-direction: column;
  font: 500 26px/30px ${CJK};
  white-space: nowrap;
  small { font: 13px/16px "DejaVu Sans", sans-serif; margin-top: -2px; }
`;

const DRAW: IconName[] = ["line", "xline", "pline", "polygon", "rect", "arc", "circle", "cloud", "spline", "ellipse", "ellipseArc", "insert", "block", "point", "hatch", "gradient", "region", "table", "mtext", "addSelected"];
const MODIFY: IconName[] = ["erase", "copyObj", "mirror", "offset", "array", "move", "rotate", "scale", "stretch", "trim", "extend", "breakAt", "breakGap", "join", "chamfer", "fillet", "blend", "explode"];
const MODES: [IconName, boolean?][] = [["snapInfer"], ["snap"], ["grid"], ["ortho", true], ["polar"], ["osnap", true], ["osnap3d"], ["otrack"], ["ducs"], ["dyn"], ["lwt", true], ["tpy", true], ["qp"], ["sc"], ["plus"]];

const SideTools = ({ items }: { items: IconName[] }) => (
  <>
    {items.map((n) => (
      <SideTool key={n} aria-label={n}><Icon name={n} size={13} /></SideTool>
    ))}
  </>
);

const Arrow = ({ d }: { d: string }) => (
  <svg width="8" height="9" viewBox="0 0 8 9" fill="#555" stroke="#555" aria-hidden="true"><path d={d} /></svg>
);

function PlanView() {
  return (
    <Drawing fill="none" stroke="#c9c9c9" aria-label="plan">
      <path d="M366.500 108v340M169 305.500h394" stroke="#b4b4b4" />
      <circle cx="366.500" cy="305" r="67" stroke="#d8d8d8" />
      <circle cx="366.500" cy="305.500" r="4.500" stroke="#b08c8c" />
      <g strokeWidth="1.500">
        <path d="M342 149v-16.500h50.500V149" />
        <path d="M342 142h50.500M342 150h50.500" />
        <path d="M342 144.500h50.500" stroke="#8a8a8a" strokeWidth="3" />
        <path d="M342 147.500h50.500" />
        <path d="M342 145v62c0 5 3 7.500 7 7.500h36.500c4 0 7-2.500 7-7.500v-62" strokeWidth="2" />
        <path d="M341 145.500h-6.500V201c0 4 3 6.500 6.500 6.500M393.500 145.500h6.500V201c0 4-3 6.500-6.500 6.500" />
        <path d="M343 151l49 49M392 151l-49 49" />
      </g>
      <rect x="364.500" y="172.500" width="5" height="5" fill="#333" stroke="#e0e0e0" />
      <circle cx="736" cy="416" r="6" fill="#b0aeac" stroke="none" />
      <circle cx="752.500" cy="418" r="6" fill="#b0aeac" stroke="none" />
    </Drawing>
  );
}

export default function App() {
  return (
    <Shell>
      <GlobalStyle />
      <Bars>
        <BarRow>
          <Bar><Tools items={["pdf", "pdfMail"]} /></Bar>
          <Bar $after={8}>
            <Tools items={["newFile", "open", "save", "|", "print", "preview", "publish", "printGlobe", "|", "cut", "copy", "paste", "matchProp", "blockEdit", "|", "undo", "v", "redo", "v", "|", "hand", "zoomRt", "zoomWin", "zoomPrev", "|", "properties", "designCenter", "palettes", "sheetSet", "markup", "calc", "|", "help"]} />
          </Bar>
          <Bar>
            {(["textStyle", "dimStyle", "tableStyle", "leaderStyle"] as IconName[]).map((n) => (
              <React.Fragment key={n}>
                <ToolButton aria-label={n}><Icon name={n} /></ToolButton>
                <Combo $w={79}>
                  <ComboSelect aria-label={n}><option></option></ComboSelect>
                  <Chevron color="#b0b0b0" />
                </Combo>
                {n !== "leaderStyle" && <ComboGap />}
              </React.Fragment>
            ))}
          </Bar>
        </BarRow>
        <BarRow>
          <Bar>
            <Combo $w={116}>
              <ComboSelect aria-label="workspace"><option>AutoCAD 经典</option></ComboSelect>
              <Chevron color="#b0b0b0" />
            </Combo>
            <Tools items={["gear", "myWorkspace"]} />
          </Bar>
          <Bar $after={8}>
            <Tools items={["layerProps"]} />
            <Combo $w={199}>
              <Icon name="bulbOn" size={11} />
              <Icon name="sun" size={10} />
              <Icon name="vpFreeze" size={11} />
              <Icon name="unlock" size={11} />
              <Icon name="swatch" size={10} />
              <ComboSelect aria-label="layer"><option>0</option></ComboSelect>
              <Chevron color="#b0b0b0" />
            </Combo>
            <Tools items={["layerCurrent", "layerPrev", "layerState"]} />
          </Bar>
          <Bar $after={8}>
            <Combo $w={99}>
              <Icon name="swatch" size={10} />
              <ComboSelect $serif aria-label="colour"><option>ByLayer</option></ComboSelect>
              <Chevron color="#b0b0b0" />
            </Combo>
            <ComboGap />
            <Combo $w={104}>
              <LineSample $w={41} />
              <ComboSelect $serif aria-label="linetype"><option>ByLayer</option></ComboSelect>
              <Chevron color="#b0b0b0" />
            </Combo>
            <ComboGap />
            <Combo $w={84}>
              <LineSample $w={25} />
              <ComboSelect $serif aria-label="lineweight"><option>ByLayer</option></ComboSelect>
              <Chevron color="#b0b0b0" />
            </Combo>
            <ComboGap />
            <Combo $w={78}>
              <ComboSelect $serif aria-label="plot style"><option>ByColor</option></ComboSelect>
              <Chevron color="#b0b0b0" />
            </Combo>
          </Bar>
          <Bar $after={0} $grow>
            <Tools items={["layerStack", "layerMerge", "|", "bulbBlue", "bulbBlueIso", "bulbYellow", "bulbSheets", "flake", "flakeSheets", "sun", "lockBlue", "lockBlueIso", "lockYellow"]} size={13} />
          </Bar>
        </BarRow>
      </Bars>

      <Body>
        <Menu>
          <MenuTitle>天正软件-...</MenuTitle>
          {MENU.map((group, g) => (
            <React.Fragment key={g}>
              {g > 0 && <MenuRule $strong={g === 1} />}
              {group.map(([label, mark]) => (
                <MenuItem key={label}>
                  <MenuMark>
                    {!mark || mark === "open" ? <Caret $open={mark === "open"} /> : <Icon name={mark} size={12} />}
                  </MenuMark>
                  {label}
                </MenuItem>
              ))}
            </React.Fragment>
          ))}
        </Menu>

        <Main>
          <Upper>
            <SideColumn>
              <SideBar $h={296}><SideTools items={DRAW} /></SideBar>
            </SideColumn>
            <Frame>
              <ViewRow>
                <Viewport>
                  <PlanView />
                  <ViewLabel>[−][俯视][二维线框]</ViewLabel>
                  <SnapTip>圆心</SnapTip>
                  <Cube>
                    <Ring />
                    <Compass $area="1 / 2">北</Compass>
                    <Compass $area="2 / 1">西</Compass>
                    <TopFace>上</TopFace>
                    <Compass $area="2 / 3">东</Compass>
                    <Compass $area="3 / 2">南</Compass>
                  </Cube>
                  <Wcs>WCS</Wcs>
                  <UcsMark width="52" height="52" viewBox="0 0 52 52" fill="none" stroke="#bdbdbd">
                    <path d="M3.500 12v34M3.500 45.500h34M.500 42.500h6v6h-6z" />
                    <path d="M5 1l4 4 4-4M9 5v4M40 36l8 8M48 36l-8 8" stroke="#a0a0a0" />
                  </UcsMark>
                </Viewport>
                <VScroll>
                  <Chevron color="#444" turn={180} />
                  <VThumb />
                  <Chevron color="#444" />
                </VScroll>
              </ViewRow>
              <TabRow>
                <TabNav aria-label="first"><Arrow d="M1.500 1v7M6 1.500v6l-3-3z" /></TabNav>
                <TabNav aria-label="previous"><Arrow d="M5 1.500v6l-3-3z" /></TabNav>
                <TabNav aria-label="next"><Arrow d="M3 1.500v6l3-3z" /></TabNav>
                <TabNav aria-label="last"><Arrow d="M2 1.500v6l3-3zM6.500 1v7" /></TabNav>
                <Tab $active>模型</Tab>
                <Tab>布局1</Tab>
                <Tab>布局2</Tab>
                <HScroll>
                  <Chevron color="#333" turn={90} />
                  <Chevron color="#333" turn={270} />
                </HScroll>
              </TabRow>
            </Frame>
            <SideColumn>
              <SideBar $h={266}><SideTools items={MODIFY} /></SideBar>
              <SideBar $h={95}>
                <SideTools items={["orderFront", "orderBack", "orderAbove", "orderUnder"]} />
                <SideRule />
                <SideTools items={["textFront", "hatchBack"]} />
              </SideBar>
            </SideColumn>
          </Upper>

          <CommandDock>
            <DockHandle>
              <Grip />
              <CloseButton aria-label="close">×</CloseButton>
              <Icon name="wrench" size={8} />
            </DockHandle>
            <CommandPane>
              <CommandLine>
                <Icon name="arrayCommand" size={14} />
                <DropArrow type="button" $color="#666" aria-label="recent commands" />
                <Verb>ARRAY</Verb>
                <span>指定阵列的中心点或</span>
                <Opening>[</Opening>
                <Option type="button">基点<Latin>(<b>B</b>)</Latin></Option>
                <Option type="button">旋转轴<Latin>(<b>A</b>)</Latin></Option>
                <Latin>]:</Latin>
                <Typed aria-label="command" />
              </CommandLine>
            </CommandPane>
          </CommandDock>
        </Main>
      </Body>

      <Status>
        <ScaleBox>比例<small> 1:100</small></ScaleBox>
        <DropArrow $color="#111" aria-label="scale list" />
        <Coords>46906, 103509, 0</Coords>
        <Modes>
          {MODES.map(([n, on]) => (
            <Mode key={n} $on={on} aria-label={n}><Icon name={n} size={12} /></Mode>
          ))}
        </Modes>
        <StatusRight>
          <Cell $w={24}>模型</Cell>
          <Cell $w={14} $plain aria-label="layout"><Icon name="quickLayout" size={12} /></Cell>
          <Cell $w={15} $plain aria-label="drawings"><Icon name="quickView" size={12} /></Cell>
          <Gap $w={14} />
          <Cell $w={41}><Icon name="annoScale" size={12} />1:1<DropArrow as="span" $color="#111" /></Cell>
          <Cell $w={15} $plain aria-label="annotation visibility"><Icon name="annoVis" size={13} /></Cell>
          <Cell $w={13} $plain aria-label="annotation auto"><Icon name="annoAuto" size={12} /></Cell>
          <Gap $w={4} />
          <Cell $w={15} $plain aria-label="workspace"><Icon name="gear" size={12} /></Cell>
          <Cell $w={15} $plain aria-label="lock"><Icon name="unlock" size={12} /></Cell>
          <Cell $w={13} $plain aria-label="hardware"><Icon name="hardware" size={12} /></Cell>
          <Cell $w={24} $on>编组</Cell>
          <Cell $w={24}>基线</Cell>
          <Cell $w={24}>填充</Cell>
          <Cell $w={24}>加粗</Cell>
          <Cell $w={43}>动态标注</Cell>
          <Gap $w={4} />
          <Cell $w={21} $plain aria-label="isolate"><Icon name="bulbOn" size={12} /></Cell>
          <DropArrow $color="#111" aria-label="status menu" />
          <Cell $w={15} $plain aria-label="clean screen"><Icon name="cleanScreen" size={12} /></Cell>
          <Gap $w={9} />
        </StatusRight>
      </Status>

      <Badge href="#">
        <svg width="36" height="38" viewBox="0 0 36 38" fill="none" stroke="#c6c9d8" strokeWidth="3" strokeLinecap="round" aria-hidden="true">
          <path d="M2.500 7v23c0 5 4 7 8 5l19-11c5-3 5-8 0-11L15 4c-3-2-7-1-7 4v17c0 2 1 3 4 3" />
          <path d="M13 14l8 4.500-8 4.500z" fill="#c6c9d8" stroke="none" />
          <path d="M23.500 15v7" strokeWidth="1.500" strokeLinecap="butt" />
        </svg>
        <BadgeText>
          溜溜自学
          <small>zixue.3066.com</small>
        </BadgeText>
      </Badge>
    </Shell>
  );
}
